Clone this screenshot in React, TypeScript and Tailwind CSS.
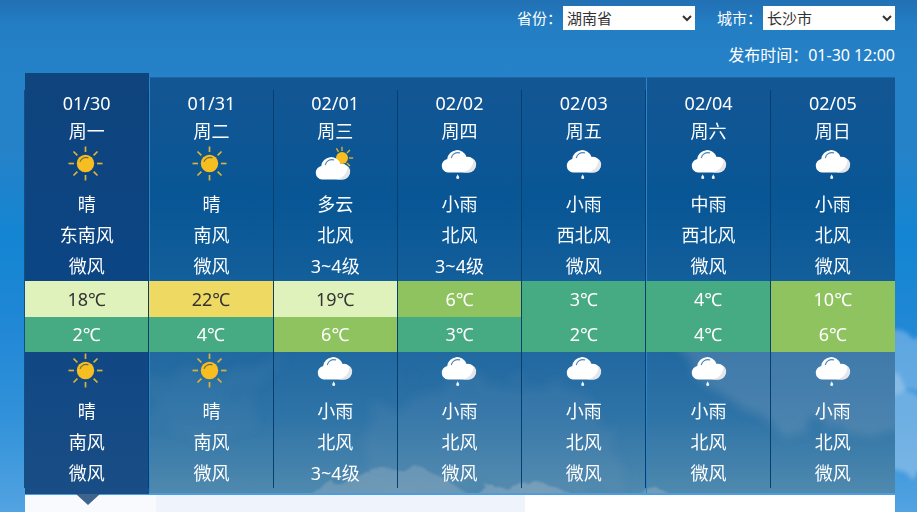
import { useState } from 'react'

type Sky = 'sun' | 'cloudy' | 'rain' | 'rain2'

type Half = { sky: Sky; text: string; wind: string; level: string }

type Day = {
  date: string
  week: string
  day: Half
  high: number
  low: number
  night: Half
}

const half = (sky: Sky, text: string, wind: string, level = '微风'): Half => ({ sky, text, wind, level })

const days: Day[] = [
  { date: '01/30', week: '周一', day: half('sun', '晴', '东南风'), high: 18, low: 2, night: half('sun', '晴', '南风') },
  { date: '01/31', week: '周二', day: half('sun', '晴', '南风'), high: 22, low: 4, night: half('sun', '晴', '南风') },
  { date: '02/01', week: '周三', day: half('cloudy', '多云', '北风', '3~4级'), high: 19, low: 6, night: half('rain', '小雨', '北风', '3~4级') },
  { date: '02/02', week: '周四', day: half('rain', '小雨', '北风', '3~4级'), high: 6, low: 3, night: half('rain', '小雨', '北风') },
  { date: '02/03', week: '周五', day: half('rain', '小雨', '西北风'), high: 3, low: 2, night: half('rain', '小雨', '北风') },
  { date: '02/04', week: '周六', day: half('rain2', '中雨', '西北风'), high: 4, low: 4, night: half('rain', '小雨', '北风') },
  { date: '02/05', week: '周日', day: half('rain', '小雨', '北风'), high: 10, low: 6, night: half('rain', '小雨', '北风') },
]

function tempColor(t: number) {
  if (t > 20) return 'bg-[#eed962] text-[#333]'
  if (t > 15) return 'bg-[#dff2bb] text-[#333]'
  if (t > 5) return 'bg-[#8ec360] text-white'
  return 'bg-[#46aa82] text-white'
}

function Cloud() {
  return (
    <g>
      <path
        d="M7 27.6A6.9 6.9 0 0 1 6.2 14A10 10 0 0 1 25.6 11.9A7.9 7.9 0 0 1 34.8 19.7A7.9 7.9 0 0 1 27 27.6Z"
        fill="#fff"
      />
      <path d="M32.4 13.8A7.9 7.9 0 0 1 27 27.6H21C28 26.4 33 21 32.4 13.8Z" fill="#e4e6ea" />
      <path d="M10.4 12.6A6.4 6.4 0 0 1 18.6 7.9" fill="none" stroke="#4d86bb" strokeWidth="1.2" strokeLinecap="round" />
    </g>
  )
}

function Drop({ x }: { x: number }) {
  return (
    <path
      d="M0 0C0.5 1.3 1.5 2 1.5 3.2A1.5 1.5 0 0 1 -1.5 3.2C-1.5 2 -0.5 1.3 0 0Z"
      transform={`translate(${x} 29.2)`}
      fill="#eef3f8"
    />
  )
}

function WeatherIcon({ sky }: { sky: Sky }) {
  return (
    <svg className="mx-auto block h-9 w-9 overflow-visible" viewBox="0 0 36 36" aria-hidden="true">
      {sky === 'sun' && (
        <g>
          {[0, 45, 90, 135, 180, 225, 270, 315].map(a => (
            <path key={a} d="M16.5 7V1.5" transform={`rotate(${a} 16.5 18.5)`} stroke="#d9b33a" strokeWidth="1.7" />
          ))}
          <circle cx="16.5" cy="18.5" r="8.7" fill="#f7be22" />
          <path d="M11 16.8A6 6 0 0 1 19.5 13.1" fill="none" stroke="#6b6a42" strokeWidth="1.1" />
        </g>
      )}
      {sky === 'cloudy' && (
        <g>
          {[-30, 0, 45, 90, 135].map(a => (
            <path key={a} d="M25 6V1.8" transform={`rotate(${a} 25 13)`} stroke="#e3b62c" strokeWidth="1.3" />
          ))}
          <circle cx="25" cy="13" r="6" fill="#f7be22" />
          <g transform="translate(-2 7)">
            <Cloud />
          </g>
        </g>
      )}
      {sky === 'rain' && (
        <g>
          <Cloud />
          <Drop x={16.7} />
        </g>
      )}
      {sky === 'rain2' && (
        <g>
          <Cloud />
          <Drop x={11.7} />
          <Drop x={22.3} />
        </g>
      )}
    </svg>
  )
}

function HalfDay({ data }: { data: Half }) {
  return (
    <>
      <div className="h-11">
        <WeatherIcon sky={data.sky} />
      </div>
      <p className="leading-[31px]">{data.text}</p>
      <p className="leading-[31px]">{data.wind}</p>
      <p className="leading-[30px]">{data.level}</p>
    </>
  )
}

function DayColumn({ data, index }: { data: Day; index: number }) {
  const active = index === 0
  const seam = index === 1 || index === 5
  return (
    <li
      className={
        active
          ? 'relative z-10 -mt-1 -mb-px bg-linear-to-b from-[#0f447d] via-[#0b4584] to-[#194d85] pt-[17px] pb-[6px]'
          : `border-t border-t-[#1a66a8] pt-3 pb-[5px] ${seam ? 'border-l border-l-[#2c85cb]' : ''}`
      }
    >
      <div className={`border-r-[#07406f] ${index < 6 ? 'border-r' : ''} ${active ? '-ml-px border-l border-l-[#11507f]' : ''}`}>
        <p className="leading-[27px]">{data.date}</p>
        <p className="leading-7">{data.week}</p>
        <HalfDay data={data.day} />
        <p className={`leading-9 ${seam ? '-ml-px' : ''} ${tempColor(data.high)}`}>{data.high}℃</p>
        <p className={`leading-[35px] ${seam ? '-ml-px' : ''} ${tempColor(data.low)}`}>{data.low}℃</p>
        <HalfDay data={data.night} />
      </div>
      {active && (
        <svg className="absolute top-full left-[51px] h-[11px] w-6" viewBox="0 0 24 11" aria-hidden="true">
          <path d="M0 0H24L12 11Z" fill="#3f638f" />
        </svg>
      )}
    </li>
  )
}

// soft clouds low in the sky, right edge of the page
function SkyClouds() {
  return (
    <svg className="absolute inset-0 h-full w-full" viewBox="0 0 917 512" preserveAspectRatio="none" aria-hidden="true">
      <defs>
        <filter id="soft">
          <feTurbulence type="fractalNoise" baseFrequency="0.06" numOctaves="3" seed="4" />
          <feDisplacementMap in="SourceGraphic" scale="24" />
          <feGaussianBlur stdDeviation="2" />
        </filter>
      </defs>
      <g fill="#a9cdee" filter="url(#soft)">
        <path d="M880 335L902 328L912 338L940 322V392L908 390L880 398Z" opacity="0.45" />
        <path d="M880 366L898 372L908 392L940 402V466L905 472L880 462Z" opacity="0.5" />
      </g>
    </svg>
  )
}

function PanelClouds() {
  return (
    <svg className="absolute inset-0 h-full w-full" viewBox="0 0 870 416" preserveAspectRatio="none" aria-hidden="true">
      <defs>
        <filter id="haze">
          <feTurbulence type="fractalNoise" baseFrequency="0.03" numOctaves="4" seed="7" />
          <feDisplacementMap in="SourceGraphic" scale="50" />
          <feGaussianBlur stdDeviation="5" />
        </filter>
        <filter id="edge">
          <feTurbulence type="fractalNoise" baseFrequency="0.06" numOctaves="3" seed="2" />
          <feDisplacementMap in="SourceGraphic" scale="12" />
          <feGaussianBlur stdDeviation="1" />
        </filter>
      </defs>
      <g fill="#8fa9c2" filter="url(#haze)">
        <path d="M650 262H890V350L850 358L800 352L760 356L720 330L670 300Z" opacity="0.28" />
        <path d="M125 310L165 290L200 300L235 270L260 275L230 330L180 360L125 350Z" opacity="0.08" />
        <path d="M335 400L345 345L375 320L405 305L450 295L480 308L520 298L570 325L600 390V416H335Z" opacity="0.1" />
      </g>
      <g fill="#a9bcc8" filter="url(#edge)">
        <path d="M275 425L300 407L330 400L350 388L380 393L400 391L425 405L445 418V425Z" opacity="0.32" />
        <path d="M450 425L460 406L482 411L515 405L545 416L550 425Z" opacity="0.4" />
        <path d="M605 425L620 413L640 413L655 425Z" opacity="0.4" />
      </g>
    </svg>
  )
}

export default function App() {
  const [province, setProvince] = useState('湖南省')
  const [city, setCity] = useState('长沙市')

  return (
    <main className="relative flex min-h-screen flex-col overflow-hidden bg-linear-[to_bottom,#2270b3_0%,#237ec4_5%,#2682c8_15%,#2682c8_28%,#1385d2_47%,#2288d6_65%,#3292d9_82%,#52a3e1_100%] pt-[6px] pr-[22px] pl-[25px] font-['Noto_Sans','Noto_Sans_CJK_SC',sans-serif] text-white">
      <SkyClouds />

      <header className="relative text-[15px]">
        <form className="flex justify-end gap-[22px]">
          <label className="flex h-6 items-center">
            <span className="w-[46px] leading-5">省份：</span>
            <select
              value={province}
              onChange={e => setProvince(e.target.value)}
              className="h-6 w-[132px] bg-white text-[#333]"
            >
              <option>湖南省</option>
              <option>湖北省</option>
              <option>广东省</option>
            </select>
          </label>
          <label className="flex h-6 items-center">
            <span className="w-[46px] leading-5">城市：</span>
            <select
              value={city}
              onChange={e => setCity(e.target.value)}
              className="h-6 w-[132px] bg-white text-[#333]"
            >
              <option>长沙市</option>
              <option>株洲市</option>
              <option>湘潭市</option>
            </select>
          </label>
        </form>
        <p className="mt-[13px] mb-[10px] text-right text-[16px] leading-6">发布时间：01-30 12:00</p>
      </header>

      <section className="relative border-b-2 border-b-[#4c9cdf] bg-linear-[to_bottom,#145694_0%,#085695_30%,#125e9b_47%,#1f67a0_64%,#2f74a7_82%,#4f89ae_100%] text-center text-[18px]">
        <PanelClouds />
        <ul className="relative grid grid-cols-7">
          {days.map((d, i) => (
            <DayColumn key={d.date} data={d} index={i} />
          ))}
        </ul>
      </section>

      <div className="grid flex-1 grid-cols-[131fr_369fr_370fr]">
        <div className="min-h-4 bg-[#f9fafe]" />
        <div className="bg-[#eef3fc]" />
        <div className="relative bg-white" />
      </div>
    </main>
  )
}
